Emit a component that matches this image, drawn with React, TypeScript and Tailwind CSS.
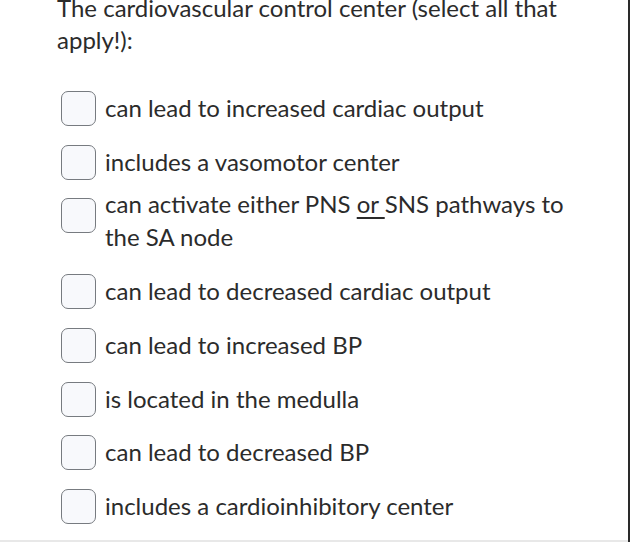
const options = [
  { text: "can lead to increased cardiac output", mt: "mt-[35px]" },
  { text: "includes a vasomotor center", mt: "mt-[19px]" },
  { text: "multi", mt: "mt-[7px]" },
  { text: "can lead to decreased cardiac output", mt: "mt-[21px]" },
  { text: "can lead to increased BP", mt: "mt-[19px]" },
  { text: "is located in the medulla", mt: "mt-[19px]" },
  { text: "can lead to decreased BP", mt: "mt-[18px]" },
  { text: "includes a cardioinhibitory center", mt: "mt-[19px]" },
];

const Box = ({ className = "" }: { className?: string }) => (
  <span
    className={`block w-[35px] h-[35px] shrink-0 rounded-[7px] border-[1.5px] border-[#777b80] bg-[#f8f9fc] ${className}`}
  />
);

export default function App() {
  return (
    <div
      className="relative w-[630px] h-[542px] overflow-hidden bg-white text-[#2b2b2b] border-r-2 border-[#2a2a2a]"
      style={{ fontFamily: "Lato, 'Open Sans', sans-serif" }}
    >
      <div className="pl-[57px] pr-[50px] mt-[-8px]">
        <p className="text-[24px] leading-[32px]">
          The cardiovascular control center (select all that apply!):
        </p>

        <ul className="pl-[4px] flex flex-col">
          {options.map((opt, i) =>
            opt.text === "multi" ? (
              <li key={i} className={`flex items-start gap-[9px] ${opt.mt}`}>
                <Box className="mt-[11px]" />
                <span className="text-[24px] leading-[33px]">
                  can activate either PNS <span className="underline underline-offset-[4px]">or </span>SNS pathways to
                  the SA node
                </span>
              </li>
            ) : (
              <li key={i} className={`flex items-start gap-[9px] ${opt.mt}`}>
                <Box />
                <span className="text-[24px] leading-[33px]">{opt.text}</span>
              </li>
            )
          )}
        </ul>
      </div>
      <div className="absolute left-0 right-0 bottom-0 h-[2px] bg-[#e8e8e8]" />
    </div>
  );
}
